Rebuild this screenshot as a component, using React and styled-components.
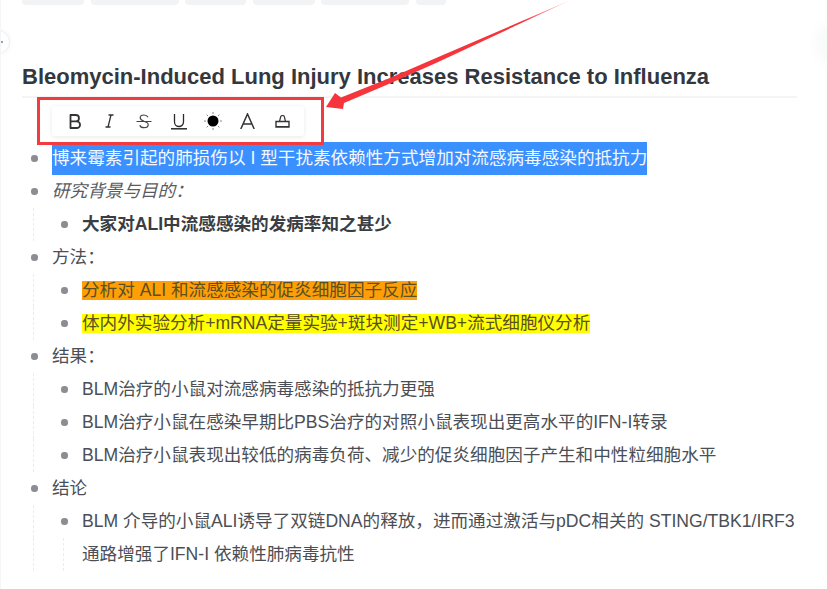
import React from 'react';
import styled, { createGlobalStyle } from 'styled-components';

const GlobalStyle = createGlobalStyle`
  html, body {
    margin: 0;
    padding: 0;
    background: #fff;
  }
  body {
    font-family: "Liberation Sans", "Noto Sans CJK SC", sans-serif;
    overflow: hidden;
  }
`;

const Page = styled.div`
  position: relative;
  width: 827px;
  height: 589px;
  overflow: hidden;
  box-sizing: border-box;
  padding-left: 22px;
  border-left: 1px solid #f4f5f6;
`;

const TabBar = styled.div`
  display: flex;
  gap: 6.6px;
  height: 5px;
  margin-left: -1px;
`;

const TabPill = styled.div`
  width: ${(p) => p.$w}px;
  height: 5px;
  background: #f2f3f5;
  border-radius: 0 0 4px 4px;
`;

const Title = styled.h1`
  margin: 58px 0 0 -1px;
  width: 775px;
  height: 33px;
  line-height: 27px;
  font-size: 22px;
  font-weight: 700;
  color: #33383e;
  border-bottom: 2px solid #f4f4f5;
  box-sizing: content-box;
`;

const ToolbarFrame = styled.div`
  margin-top: -1px;
  margin-left: 14px;
  width: 287px;
  height: 48px;
  box-sizing: border-box;
  border: 3px solid #f33b3f;
  display: flex;
  align-items: flex-start;
  padding: 6px 0 0 12px;
  position: relative;
  z-index: 2;
`;

const Toolbar = styled.div`
  display: flex;
  align-items: center;
  width: 252px;
  height: 30px;
  background: #fff;
  border-radius: 3px;
  box-shadow: 0 1px 5px rgba(0, 0, 0, 0.09);
`;

const ToolIcon = styled.div`
  width: 34.5px;
  height: 30px;
  flex: none;
  display: flex;
  align-items: center;
  justify-content: center;
  color: #2b2b2b;
  &:first-child {
    margin-left: 6px;
  }
`;

const Outline = styled.div`
  margin-top: -3px;
`;

const Row = styled.div`
  position: relative;
  height: 33px;
  box-sizing: border-box;
  padding-bottom: 4px;
  display: flex;
  align-items: center;
  padding-left: ${(p) => (p.$level === 2 ? 59 : 29)}px;
  font-size: 17.6px;
  color: #4b4f55;
  white-space: nowrap;

  &::before {
    content: '';
    position: absolute;
    display: ${(p) => (p.$plain ? 'none' : 'block')};
    left: ${(p) => (p.$level === 2 ? 38 : 8)}px;
    top: 13px;
    width: 6.5px;
    height: 6.5px;
    border-radius: 50%;
    background: #8a8d91;
  }

  &::after {
    content: '';
    position: absolute;
    display: ${(p) => (p.$guide ? 'block' : 'none')};
    left: 10px;
    top: 0;
    bottom: 0;
    border-left: 1px dashed #ececee;
  }
`;

const Guide2 = styled.span`
  position: absolute;
  left: 40px;
  top: 0;
  bottom: 0;
  border-left: 1px dashed #ececee;
`;

const Selected = styled.span`
  display: flex;
  align-items: center;
  align-self: flex-start;
  box-sizing: border-box;
  height: 33px;
  padding-bottom: 4px;
  background: #3b90ff;
  color: #f4f8ff;
`;

const Marked = styled.span`
  display: flex;
  align-items: center;
  box-sizing: border-box;
  height: 19px;
  margin-top: 3px;
  padding-bottom: 3px;
  background: ${(p) => p.$color};
  color: #5b5024;
`;

const Italic = styled.span`
  font-style: italic;
  color: #585b60;
`;

const Strong = styled.span`
  font-weight: 700;
  color: #3a3d42;
`;

const EdgeHandle = styled.div`
  position: absolute;
  left: -15px;
  top: 30px;
  width: 22px;
  height: 22px;
  border-radius: 50%;
  background: #fff;
  border: 1px solid #eceef2;
  box-shadow: 0 0 6px rgba(0, 0, 0, 0.04);
`;

const EdgeDot = styled.i`
  position: absolute;
  left: 14px;
  top: 10px;
  width: 2px;
  height: 2px;
  background: #8fa0c0;
`;

const RightGlow = styled.div`
  position: absolute;
  right: -18px;
  top: 24px;
  width: 30px;
  height: 40px;
  border-radius: 50%;
  background: #f9fafa;
  filter: blur(4px);
`;

const ArrowLayer = styled.svg`
  position: absolute;
  left: 0;
  top: 0;
  z-index: 3;
  pointer-events: none;
`;

const icons = [
  <svg key="b" width="13" height="15" viewBox="0 0 13 15" fill="none" stroke="#333" strokeWidth="1.8">
    <path d="M1.5 1v13M.8 1h6a3 3 0 0 1 0 6.3H1.5M1.5 7.3h6.2a3.3 3.3 0 0 1 0 6.7H.8" />
  </svg>,
  <svg key="i" width="9" height="14" viewBox="0 0 9 14" fill="none" stroke="#333" strokeWidth="1.3">
    <path d="M3.5 1H8.500M.5 13H5.500M6 1 3 13" />
  </svg>,
  <svg key="s" width="16" height="15" viewBox="0 0 16 15" fill="none" stroke="#444" strokeWidth="1.2">
    <path d="M.5 7.5h15M12 3.2C11.4 1.9 10 1 8 1 5.8 1 4.2 2 4.2 3.8c0 1.5 1.1 2.5 3.800 3.500 3 1 4.200 1.800 4.200 3.400 0 1.900-1.800 3-4.200 3-2.100 0-3.700-.9-4.200-2.500" />
  </svg>,
  <svg key="u" width="16" height="17" viewBox="0 0 16 17" fill="none" stroke="currentColor" strokeWidth="1.3">
    <path d="M3.5 1v8a4.5 4.5 0 0 0 9 0V1" />
    <path d="M0 15.8h16" strokeWidth="1.5" />
  </svg>,
  <svg key="c" width="18" height="18" viewBox="0 0 18 18" fill="#000" stroke="#888" strokeWidth="1">
    <circle cx="9" cy="9" r="5.5" stroke="none" />
    <path d="M9 0v2M9 16v2M0 9h2M16 9h2M2.600 2.600 4 4M14 14l1.400 1.400M2.600 15.400 4 14M14 4l1.400-1.400" />
  </svg>,
  <svg key="a" width="15" height="16" viewBox="0 0 15 16" fill="none" stroke="#333" strokeWidth="1.5">
    <path d="M.8 16 7.500 1l6.700 15M3 11h9" />
  </svg>,
  <svg key="e" width="15" height="13" viewBox="0 0 15 13" fill="none" stroke="#333" strokeWidth="1.2">
    <path d="M4.500 6.500 5.500 2.500a2 2 0 0 1 4 0L10.500 6.500" />
    <path d="M1 6.500h13v5.500H1zM1 11.800h13" strokeWidth="1.400" />
  </svg>,
];

export default function App() {
  return (
    <Page>
      <GlobalStyle />
      <TabBar>
        <TabPill $w={62} />
        <TabPill $w={88} />
        <TabPill $w={61} />
        <TabPill $w={62} />
        <TabPill $w={88} />
        <TabPill $w={30} />
      </TabBar>
      <EdgeHandle>
        <EdgeDot />
      </EdgeHandle>
      <RightGlow />

      <Title>Bleomycin-Induced Lung Injury Increases Resistance to Influenza</Title>

      <ToolbarFrame>
        <Toolbar>{icons.map((icon, i) => <ToolIcon key={i}>{icon}</ToolIcon>)}</Toolbar>
      </ToolbarFrame>

      <Outline>
        <Row $level={1}>
          <Selected>博来霉素引起的肺损伤以 I 型干扰素依赖性方式增加对流感病毒感染的抵抗力</Selected>
        </Row>
        <Row $level={1}>
          <Italic>研究背景与目的：</Italic>
        </Row>
        <Row $level={2} $guide>
          <Strong>大家对ALI中流感感染的发病率知之甚少</Strong>
        </Row>
        <Row $level={1}>方法：</Row>
        <Row $level={2} $guide>
          <Marked $color="#ff9f05">分析对 ALI 和流感感染的促炎细胞因子反应</Marked>
        </Row>
        <Row $level={2} $guide>
          <Marked $color="#ffff00">体内外实验分析+mRNA定量实验+斑块测定+WB+流式细胞仪分析</Marked>
        </Row>
        <Row $level={1}>结果：</Row>
        <Row $level={2} $guide>BLM治疗的小鼠对流感病毒感染的抵抗力更强</Row>
        <Row $level={2} $guide>BLM治疗小鼠在感染早期比PBS治疗的对照小鼠表现出更高水平的IFN-I转录</Row>
        <Row $level={2} $guide>BLM治疗小鼠表现出较低的病毒负荷、减少的促炎细胞因子产生和中性粒细胞水平</Row>
        <Row $level={1}>结论</Row>
        <Row $level={2} $guide>BLM 介导的小鼠ALI诱导了双链DNA的释放，进而通过激活与pDC相关的 STING/TBK1/IRF3</Row>
        <Row $level={2} $guide $plain>
          <Guide2 />
          通路增强了IFN-I 依赖性肺病毒抗性
        </Row>
      </Outline>

      <ArrowLayer width="827" height="589" viewBox="0 0 827 589">
        <defs>
          <linearGradient id="tail" x1="324" y1="107" x2="572" y2="0" gradientUnits="userSpaceOnUse">
            <stop offset="0" stopColor="#f5353b" />
            <stop offset="0.8" stopColor="#f5353b" />
            <stop offset="1" stopColor="#f5353b" stopOpacity="0.1" />
          </linearGradient>
        </defs>
        <path d="M325 107 334 93 340 97.500 390 77.500 435 58 572 -1 435 63 390 83 343 103 342 109Z" fill="url(#tail)" />
      </ArrowLayer>
    </Page>
  );
}
